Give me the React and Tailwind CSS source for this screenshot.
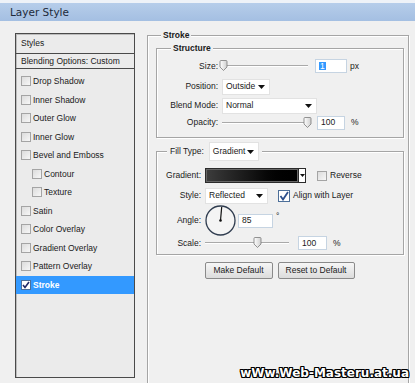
import React from "react";
import clsx from "clsx";

const Check = ({ checked, dark }) => (
  <span
    className={clsx(
      "inline-flex items-center justify-center w-[10px] h-[10px] border shrink-0",
      checked ? "border-[#4d6f99] bg-white" : "border-[#a4a4a4] bg-gradient-to-br from-[#dcdcdc] to-[#f7f7f7]"
    )}
  >
    {checked && (
      <svg width="8" height="8" viewBox="0 0 8 8">
        <path d="M1 4 L3 6.5 L7 1" fill="none" stroke={dark ? "#222a66" : "#2c4f8c"} strokeWidth="1.6" />
      </svg>
    )}
  </span>
);

const Item = ({ label, indent, checked, active }) => (
  <div
    className={clsx(
      "flex items-center h-[18.5px]",
      active ? "bg-[#3399ff] text-white font-bold" : "text-[#1a1a1a]",
      indent ? "pl-[16px]" : "pl-[5px]"
    )}
  >
    <Check checked={checked} dark />
    <span className="ml-[2px]">{label}</span>
  </div>
);

const Arrow = () => (
  <svg width="7" height="4" viewBox="0 0 7 4">
    <path d="M0 0 H7 L3.5 4 Z" fill="#111" />
  </svg>
);

const Select = ({ value, w }) => (
  <div className={clsx("flex items-center justify-between h-[16px] bg-white pl-[3px] pr-[4px] border border-[#e2e2e2]", w)}>
    <span>{value}</span>
    <Arrow />
  </div>
);

const Field = ({ value, w, selected }) => (
  <div className={clsx("flex items-center h-[14px] bg-white border border-[#c6d4e2] pl-[3px]", w)}>
    {selected ? <span className="bg-[#3399ff] text-white px-[1px]">{value}</span> : value}
  </div>
);

const Thumb = () => (
  <svg width="9" height="11" viewBox="0 0 9 11">
    <defs>
      <linearGradient id="tg" x1="0" y1="0" x2="1" y2="0">
        <stop offset="0" stopColor="#ffffff" />
        <stop offset="1" stopColor="#cfcfcf" />
      </linearGradient>
    </defs>
    <path d="M1 1.5 Q1 0.5 2 0.5 H7 Q8 0.5 8 1.5 V7 L4.5 10.5 L1 7 Z" fill="url(#tg)" stroke="#7a7a7a" strokeWidth="0.8" />
  </svg>
);

const Slider = ({ w, pos }) => (
  <div className={clsx("relative h-[12px] flex items-center", w)}>
    <div className="w-full h-[2px] border-t border-[#a9a9a9] border-b border-b-white" />
    <div className="absolute top-[0px]" style={{ left: pos }}>
      <Thumb />
    </div>
  </div>
);

const Label = ({ children, w }) => <div className={clsx("text-right shrink-0 pr-[4px]", w)}>{children}</div>;

export default function App() {
  return (
    <div className="relative w-[415px] h-[383px] overflow-hidden bg-[#f0f0f0] text-[8.5px] text-[#1a1a1a] font-['Liberation_Sans',sans-serif] leading-none">
      <div className="h-[21px] border-t-[3px] border-[#eef2f8] bg-gradient-to-b from-[#b6cdea] to-[#a4bfe2] flex items-center pl-[10px] text-[10.5px] text-[#1d2a3a] font-['DejaVu_Sans',sans-serif]">
        Layer Style
      </div>

      <div className="flex pt-[12px]">
        <div className="ml-[15px] w-[120px] h-[345px] border border-[#4a4a4a] bg-[#ebebeb] shadow-[inset_1px_1px_0_#bdbdbd]">
          <div className="h-[20px] border-b border-[#4a4a4a] flex items-center pl-[5px]">Styles</div>
          <div className="h-[15px] border-b border-[#4a4a4a] flex items-center pl-[5px]">Blending Options: Custom</div>
          <div className="mt-[3px]">
            <Item label="Drop Shadow" />
            <Item label="Inner Shadow" />
            <Item label="Outer Glow" />
            <Item label="Inner Glow" />
            <Item label="Bevel and Emboss" />
            <Item label="Contour" indent />
            <Item label="Texture" indent />
            <Item label="Satin" />
            <Item label="Color Overlay" />
            <Item label="Gradient Overlay" />
            <Item label="Pattern Overlay" />
            <Item label="Stroke" checked active />
          </div>
        </div>

        <div className="relative ml-[12px] mt-[2px] w-[262px] h-[349px] border border-[#a5a5a5] shadow-[inset_1px_1px_0_#fff,1px_1px_0_#fff]">
          <div className="absolute -top-[5px] left-[13px] bg-[#f0f0f0] px-[2px] font-bold">Stroke</div>

          <div className="relative ml-[8px] mt-[12px] w-[248px] h-[90px] border border-[#a5a5a5] shadow-[inset_1px_1px_0_#fff,1px_1px_0_#fff]">
            <div className="absolute -top-[5px] left-[14px] bg-[#f0f0f0] px-[2px] font-bold">Structure</div>
            <div className="flex items-center h-[14px] mt-[10px]">
              <Label w="w-[65px]">Size:</Label>
              <Slider w="w-[86px]" pos="-3px" />
              <div className="ml-[7px]">
                <Field value="1" w="w-[32px]" selected />
              </div>
              <span className="ml-[3px]">px</span>
            </div>
            <div className="flex items-center h-[17px] mt-[5px]">
              <Label w="w-[65px]">Position:</Label>
              <Select value="Outside" w="w-[48px]" />
            </div>
            <div className="flex items-center h-[17px] mt-[2px]">
              <Label w="w-[65px]">Blend Mode:</Label>
              <Select value="Normal" w="w-[95px]" />
            </div>
            <div className="flex items-center h-[15px] mt-[1px]">
              <Label w="w-[65px]">Opacity:</Label>
              <Slider w="w-[86px]" pos="81px" />
              <div className="ml-[9px]">
                <Field value="100" w="w-[28px]" />
              </div>
              <span className="ml-[6px]">%</span>
            </div>
          </div>

          <div className="relative ml-[8px] mt-[13px] w-[248px] h-[104px] border border-[#a5a5a5] shadow-[inset_1px_1px_0_#fff,1px_1px_0_#fff]">
            <div className="absolute -top-[10px] left-[10px] bg-[#f0f0f0] px-[3px] flex items-center">
              <span className="mr-[5px]">Fill Type:</span>
              <Select value="Gradient" w="w-[50px] h-[19px]" />
            </div>
            <div className="flex items-center h-[15px] mt-[16px]">
              <Label w="w-[48px]">Gradient:</Label>
              <div className="flex h-[15px] border border-[#2a2a2a]">
                <div className="w-[92px] h-full bg-gradient-to-r from-[#3c3c3c] via-[#141414] to-black border border-[#666]" />
                <div className="w-[7px] h-full bg-white flex items-center justify-center border-l border-[#2a2a2a]">
                  <svg width="5" height="3" viewBox="0 0 5 3"><path d="M0 0 H5 L2.5 3 Z" fill="#111" /></svg>
                </div>
              </div>
              <div className="ml-[11px] flex items-center">
                <Check />
                <span className="ml-[3px]">Reverse</span>
              </div>
            </div>
            <div className="flex items-center h-[15px] mt-[5px]">
              <Label w="w-[48px]">Style:</Label>
              <Select value="Reflected" w="w-[63px] h-[15px]" />
              <div className="ml-[10px] flex items-center">
                <span className="inline-flex items-center justify-center w-[12px] h-[12px] border border-[#4d6f99] bg-white">
                  <svg width="10" height="10" viewBox="0 0 10 10">
                    <path d="M1.5 5 L4 8.5 L9 1" fill="none" stroke="#2c4f8c" strokeWidth="1.8" />
                  </svg>
                </span>
                <span className="ml-[3px]">Align with Layer</span>
              </div>
            </div>
            <div className="flex items-center h-[31px] mt-[2px]">
              <Label w="w-[48px]">Angle:</Label>
              <svg width="31" height="31" viewBox="0 0 31 31">
                <circle cx="15.5" cy="15.5" r="14.5" fill="#f4f4f4" stroke="#2f3c4f" strokeWidth="1.3" />
                <line x1="15.5" y1="15.5" x2="16.7" y2="2" stroke="#111" strokeWidth="1.2" />
                <circle cx="15.5" cy="15.5" r="1.3" fill="#111" />
              </svg>
              <div className="ml-[2px]">
                <Field value="85" w="w-[35px]" />
              </div>
              <span className="ml-[3px] self-start mt-[7px]">°</span>
            </div>
            <div className="flex items-center h-[14px] mt-[0px]">
              <Label w="w-[48px]">Scale:</Label>
              <Slider w="w-[84px]" pos="48px" />
              <div className="ml-[9px]">
                <Field value="100" w="w-[29px]" />
              </div>
              <span className="ml-[6px]">%</span>
            </div>
          </div>

          <div className="flex justify-center gap-[5px] mt-[7px] pl-[3px]">
            <div className="w-[68px] h-[17px] flex items-center justify-center rounded-[2px] border border-[#8a8a8a] bg-gradient-to-b from-[#f6f6f6] to-[#dcdcdc]">
              Make Default
            </div>
            <div className="w-[77px] h-[17px] flex items-center justify-center rounded-[2px] border border-[#8a8a8a] bg-gradient-to-b from-[#f6f6f6] to-[#dcdcdc]">
              Reset to Default
            </div>
          </div>
        </div>
      </div>

      <div className="absolute right-[6px] bottom-[4px] text-[12px] font-bold text-white font-['DejaVu_Sans',sans-serif] tracking-[0px] [text-shadow:1px_1px_0_#000,-1px_-1px_0_#000,1px_-1px_0_#000,-1px_1px_0_#000,0_1px_0_#000,0_-1px_0_#000,1px_0_0_#000,-1px_0_0_#000]">
        wWw.Web-Masteru.at.ua
      </div>
    </div>
  );
}
